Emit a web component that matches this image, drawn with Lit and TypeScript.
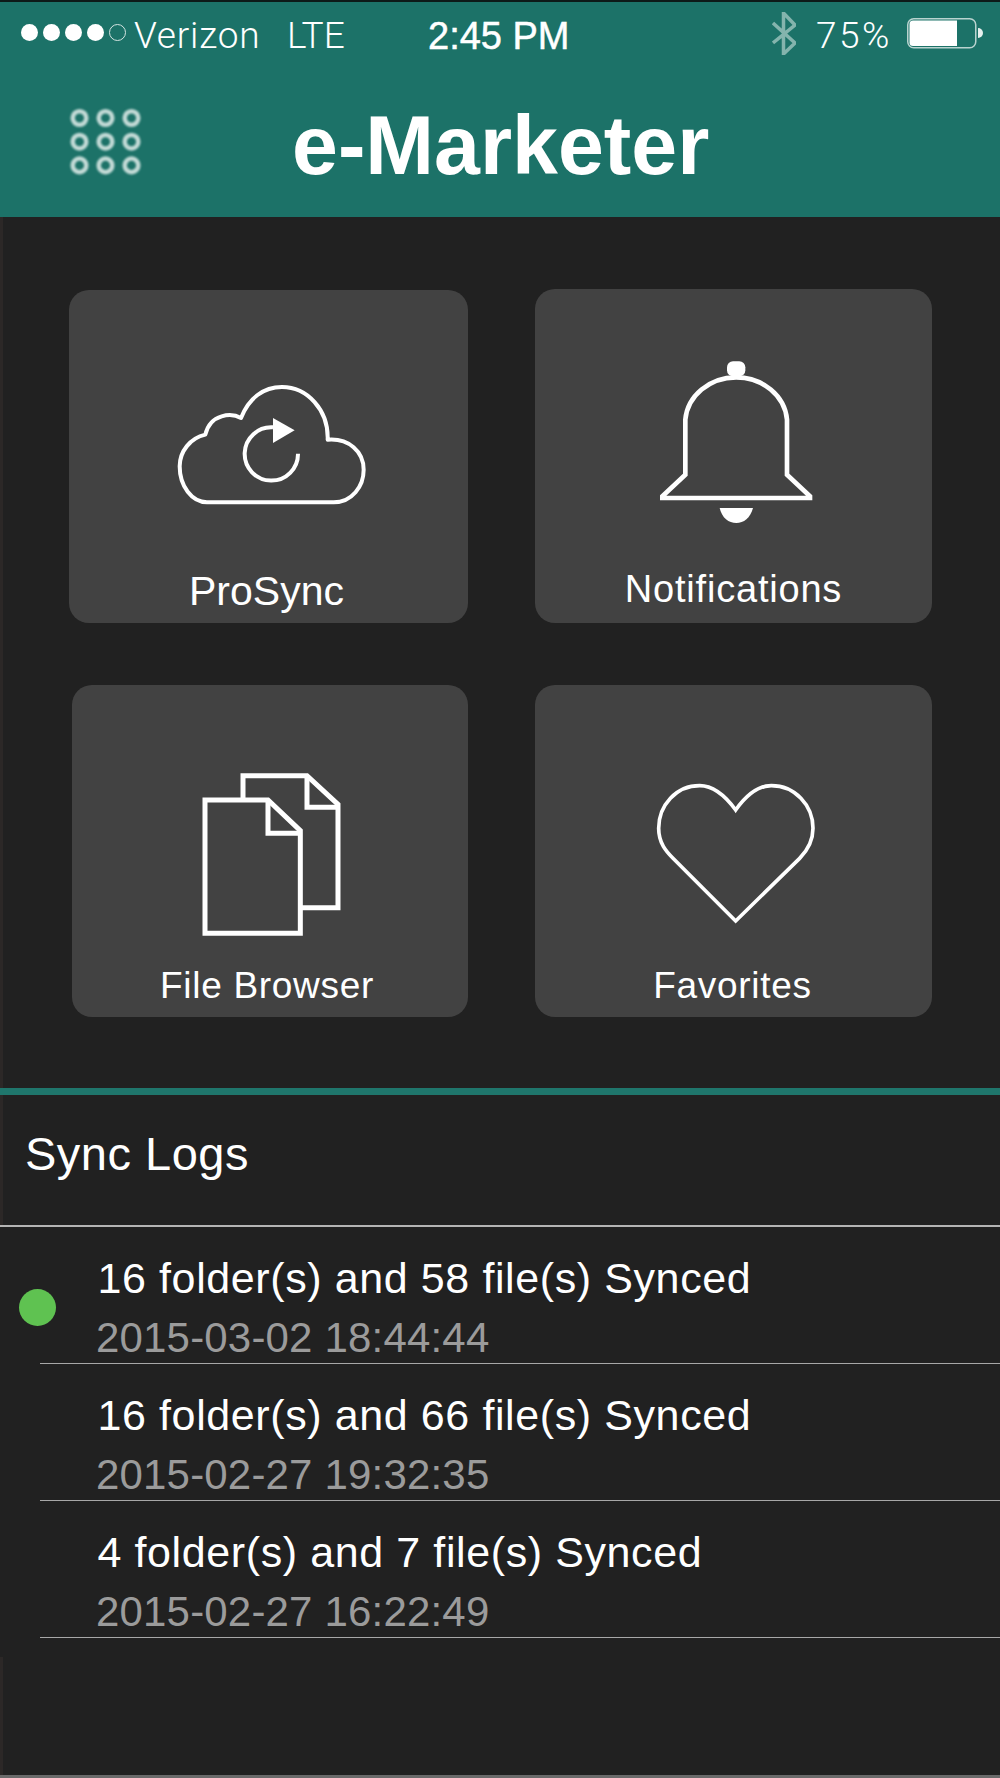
import { LitElement, html, css, svg } from "lit";
import { customElement } from "lit/decorators.js";

const logs = [
  { title: "16 folder(s) and 58 file(s) Synced", date: "2015-03-02 18:44:44", active: true },
  { title: "16 folder(s) and 66 file(s) Synced", date: "2015-02-27 19:32:35", active: false },
  { title: "4 folder(s) and 7 file(s) Synced", date: "2015-02-27 16:22:49", active: false },
];

@customElement("app-root")
export class AppRoot extends LitElement {
  static styles = css`
    :host {
      display: block;
      width: 1000px;
      height: 1778px;
      background: #212121;
      color: #fff;
      font-family: "Liberation Sans", Arial, sans-serif;
      overflow: hidden;
    }
    .page { display: flex; flex-direction: column; height: 1778px; border-top: 2px solid #0d1a18; border-bottom: 3px solid #6a6a6a; box-sizing: border-box; }
    .header { background: #1c7268; height: 215px; display: flex; flex-direction: column; flex: none; }
    .status { height: 58px; display: flex; align-items: flex-start; padding-left: 21px; flex: none; }
    .dots { display: flex; gap: 5px; margin-top: 22px; flex: none; }
    .dot { width: 17px; height: 17px; border-radius: 50%; background: #fff; box-sizing: border-box; }
    .dot.empty { background: none; border: 1.5px solid #d5e5e2; }
    .st { font-family: Roboto, "Liberation Sans", sans-serif; font-weight: 300; font-size: 37px; line-height: 42px; margin-top: 13px; white-space: nowrap; flex: none; }
    .carrier { margin-left: 8px; width: 153px; letter-spacing: 0.8px; }
    .net { width: 141px; }
    .time { font-family: "Liberation Sans", sans-serif; font-weight: 400; font-size: 38px; width: 344px; -webkit-text-stroke: 0.5px #fff; }
    .bt { margin-top: 10px; margin-right: 20px; flex: none; filter: blur(0.4px); }
    .pct { width: 91px; letter-spacing: 2.5px; }
    .batt { margin-top: 16px; flex: none; }
    .bar { display: flex; align-items: flex-start; flex: 1; }
    .grid-icon { margin: 48px 0 0 66px; flex: none; filter: blur(0.8px); }
    h1 { margin: 39px 0 0 150px; font-size: 82.5px; line-height: 92px; font-weight: 700; white-space: nowrap; }
    .grid { display: grid; grid-template-columns: 399px 397px; grid-template-rows: 334px 332px; column-gap: 67px; row-gap: 62px; padding: 72px 68px 71px 69px; flex: none; box-shadow: inset 3px 0 #2c2827; }
    .card { background: #424242; border-radius: 20px; display: flex; flex-direction: column; box-sizing: border-box; }
    .card.c1 { margin-top: 1px; }
    .card.c3 { margin-left: 3px; }
    .icon { align-self: flex-start; flex: none; display: block; fill: none; stroke: #fff; filter: blur(0.6px); }
    .c1 .icon { margin: 93.3px 0 0 107.7px; }
    .c2 .icon { margin: 69.3px 0 0 121.7px; }
    .c3 .icon { margin: 85px 0 0 126.3px; }
    .c4 .icon { margin: 95px 0 0 118.3px; }
    .label { margin-top: auto; text-align: center; white-space: nowrap; line-height: 50px; }
    .c1 .label { font-size: 41px; padding: 0 4px 7px 0; }
    .c2 .label { font-size: 38px; letter-spacing: 0.8px; padding-bottom: 9px; }
    .c3 .label { font-size: 37px; letter-spacing: 0.7px; padding: 0 6px 6px 0; }
    .c4 .label { font-size: 37px; letter-spacing: 0.7px; padding: 0 2px 6px 0; }
    .rule { height: 7px; background: #1f766c; flex: none; }
    .sync { height: 132px; box-sizing: border-box; border-bottom: 2px solid #b4b4b4; padding: 32px 0 0 25px; font-size: 47px; letter-spacing: 0.5px; line-height: 54px; flex: none; box-shadow: inset 3px 0 #2c2827; }
    .row { height: 137px; flex: none; box-sizing: border-box; margin-left: 40px; border-bottom: 1.5px solid #a8a8a8; padding: 27px 0 0 58px; position: relative; }
    .row .t { font-size: 43px; line-height: 48px; white-space: nowrap; letter-spacing: 0.6px; margin-left: -0.5px; }
    .row .d { font-size: 42px; line-height: 48px; color: #9b9b9b; margin-top: 12px; white-space: nowrap; margin-left: -2px; letter-spacing: 0.18px; }
    .led { position: absolute; left: -21px; top: 62px; width: 37px; height: 37px; border-radius: 50%; background: #5fc251; }
    .filler { flex: 1; margin-top: 19px; box-shadow: inset 3px 0 #2c2827; }
  `;

  render() {
    return html`<div class="page">
      <div class="header">
        <div class="status">
          <div class="dots">
            <span class="dot"></span><span class="dot"></span><span class="dot"></span><span class="dot"></span><span class="dot empty"></span>
          </div>
          <span class="st carrier">Verizon</span>
          <span class="st net">LTE</span>
          <span class="st time">2:45 PM</span>
          <svg class="bt" width="24" height="43" viewBox="0 0 24 43" fill="none" stroke="#84b4ad" stroke-width="3.5">
            <path d="M1 11 L23 31 L11.5 42 V1 L23 13 L1 31"></path>
          </svg>
          <span class="st pct">75%</span>
          <svg class="batt" width="76" height="31" viewBox="0 0 76 31">
            <rect x="0.75" y="0.75" width="68" height="29" rx="6" fill="none" stroke="#b9d3cf" stroke-width="1.5"></rect>
            <path d="M6 2.5 H50 V28 H6 a3.5 3.5 0 0 1 -3.5 -3.5 V6 a3.5 3.5 0 0 1 3.5 -3.5 Z" fill="#fff"></path>
            <path d="M71 10 a5 5 0 0 1 0 10 Z" fill="#e6f0ee"></path>
          </svg>
        </div>
        <div class="bar">
          <svg class="grid-icon" width="76" height="68" viewBox="0 0 76 68" fill="none" stroke="#c4dbd7" stroke-width="4.5">
            ${[0, 1, 2].flatMap((r) =>
              [0, 1, 2].map((c) => svg`<circle cx=${13.5 + c * 26} cy=${10 + r * 23.7} r="6.8"></circle>`)
            )}
          </svg>
          <h1>e-Marketer</h1>
        </div>
      </div>
      <div class="grid">
        <div class="card c1">
          <svg class="icon" width="190" height="123.33" viewBox="380 340 570 370" stroke-width="12" stroke-linejoin="round">
            <path d="M470 698 H850 C905 698 940 650 940 600 C940 545 895 505 832 510 C835 420 770 352 695 352 C640 352 595 385 572 445 C545 430 480 430 465 495 C420 505 388 545 388 590 C388 650 425 698 470 698 Z"></path>
            <path d="M743 552 A80 80 0 1 1 668 473"></path>
            <path d="M668 445 L733 482 L668 520 Z" fill="#fff" stroke="none"></path>
          </svg>
          <div class="label">ProSync</div>
        </div>
        <div class="card c2">
          <svg class="icon" width="160" height="168.33" viewBox="440 265 480 505" stroke-width="14">
            <path d="M456 685 H899 V680 L830 615 V450 A153 138 0 0 0 525 450 V615 L456 680 Z"></path>
            <rect x="650" y="275" width="55" height="45" rx="18" fill="#fff" stroke="none"></rect>
            <path d="M628 715 H728 C720 745 700 760 678 760 C655 760 635 745 628 715 Z" fill="#fff" stroke="none"></path>
          </svg>
          <div class="label">Notifications</div>
        </div>
        <div class="card c3">
          <svg class="icon" width="146.67" height="170" viewBox="445 300 440 510" stroke-width="15">
            <path d="M466 390 H655 L752 482 V790 H466 Z"></path>
            <path d="M655 390 V490 H752"></path>
            <path d="M580 385 V317 H772 L865 403 V713 H752"></path>
            <path d="M772 317 V412 H865"></path>
          </svg>
          <div class="label">File Browser</div>
        </div>
        <div class="card c4">
          <svg class="icon" width="166.67" height="146.67" viewBox="430 330 500 440" stroke-width="11">
            <path d="M678 420 C645 375 610 347 570 347 C500 347 447 405 447 475 C447 520 470 545 490 565 L678 753 L870 565 C890 545 910 515 910 475 C910 405 855 347 785 347 C745 347 710 375 678 420 Z"></path>
          </svg>
          <div class="label">Favorites</div>
        </div>
      </div>
      <div class="rule"></div>
      <div class="sync">Sync Logs</div>
      ${logs.map(
        (l) => html`<div class="row">
          ${l.active ? html`<span class="led"></span>` : ""}
          <div class="t">${l.title}</div>
          <div class="d">${l.date}</div>
        </div>`
      )}
      <div class="filler"></div>
    </div>`;
  }
}
